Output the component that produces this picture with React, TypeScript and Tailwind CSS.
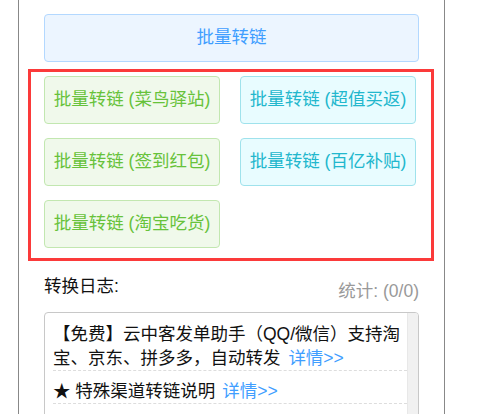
import React from "react";

const font = { fontFamily: '"Liberation Sans", "Noto Sans CJK SC", sans-serif' };

function GreenBtn({ label }: { label: string }) {
  return (
    <div className="h-[48px] w-[176px] rounded-[4px] border border-[#c2e7b0] bg-[#f0f9eb] text-[#67c23a] flex items-center justify-center text-[17.5px] leading-none">
      {label}
    </div>
  );
}

function CyanBtn({ label }: { label: string }) {
  return (
    <div className="h-[48px] w-[176px] rounded-[4px] border border-[#9fe2ec] bg-[#e8fcff] text-[#22b7cd] flex items-center justify-center text-[17.5px] leading-none">
      {label}
    </div>
  );
}

export default function App() {
  return (
    <div className="h-[414px] overflow-hidden bg-white" style={font}>
      <div className="ml-[18px] w-[427px] h-[414px] border-x border-[#888] pt-[14px]">
        <div className="ml-[25px] w-[375px] h-[48px] rounded-[4px] border border-[#b3d8ff] bg-[#ecf5ff] text-[#409eff] flex items-center justify-center text-[17.5px] leading-none">
          批量转链
        </div>
        <div className="mt-[7px] ml-[9px] w-[406px] h-[192px] border-[3px] border-[#fb3a3a] pt-[4px] pl-[13px]">
          <div className="grid grid-cols-[176px_176px] gap-x-[20px] gap-y-[14px]">
            <GreenBtn label="批量转链 (菜鸟驿站)" />
            <CyanBtn label="批量转链 (超值买返)" />
            <GreenBtn label="批量转链 (签到红包)" />
            <CyanBtn label="批量转链 (百亿补贴)" />
            <GreenBtn label="批量转链 (淘宝吃货)" />
          </div>
        </div>
        <div className="mt-[13px] ml-[25px] w-[375px] h-[24px] flex justify-between items-start text-[17.5px] leading-[24px]">
          <span className="text-[#111]">转换日志:</span>
          <span className="text-[#999] pt-[5px]">统计: (0/0)</span>
        </div>
        <div className="mt-[14px] ml-[25px] w-[375px] h-[140px] rounded-[4px] border border-[#c8c8c8] flex overflow-hidden">
          <div className="flex-1 pl-[8px] pt-[1px] text-[17.5px] leading-[24px] text-[#111]">
            <div className="pt-[8px] border-b border-dashed border-[#ddd]">
              【免费】云中客发单助手（QQ/微信）支持淘宝、京东、拼多多，自动转发{" "}
              <span className="text-[#409eff] ml-[3px]">详情&gt;&gt;</span>
            </div>
            <div className="pt-[8px] border-b border-dashed border-[#ddd]">
              ★ 特殊渠道转链说明{" "}
              <span className="text-[#409eff] ml-[2px]">详情&gt;&gt;</span>
            </div>
          </div>
          <div className="w-[11px] bg-[#f1f1f1] border-l border-[#e8e8e8]"></div>
        </div>
      </div>
    </div>
  );
}
